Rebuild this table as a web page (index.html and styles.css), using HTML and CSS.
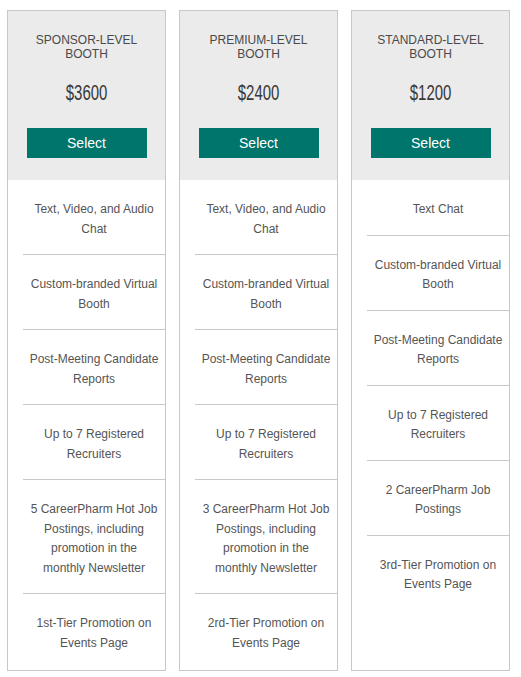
FILE: index.html
```html
<!DOCTYPE html>
<html lang="en">
<head>
<meta charset="utf-8">
<title>Booth Pricing</title>
<link rel="stylesheet" href="styles.css">
</head>
<body>
<div class="plans">
  <div class="card">
    <div class="card-head">
      <h2 class="title">SPONSOR-LEVEL<br>BOOTH</h2>
      <div class="price"><span class="price-num">$3600</span></div>
      <button class="select">Select</button>
    </div>
    <ul class="features">
      <li>Text, Video, and Audio Chat</li>
      <li>Custom-branded Virtual Booth</li>
      <li>Post-Meeting Candidate Reports</li>
      <li>Up to 7 Registered Recruiters</li>
      <li>5 CareerPharm Hot Job Postings, including promotion in the monthly Newsletter</li>
      <li>1st-Tier Promotion on Events Page</li>
    </ul>
  </div>
  <div class="card">
    <div class="card-head">
      <h2 class="title">PREMIUM-LEVEL<br>BOOTH</h2>
      <div class="price"><span class="price-num">$2400</span></div>
      <button class="select">Select</button>
    </div>
    <ul class="features">
      <li>Text, Video, and Audio Chat</li>
      <li>Custom-branded Virtual Booth</li>
      <li>Post-Meeting Candidate Reports</li>
      <li>Up to 7 Registered Recruiters</li>
      <li>3 CareerPharm Hot Job Postings, including promotion in the monthly Newsletter</li>
      <li>2rd-Tier Promotion on Events Page</li>
    </ul>
  </div>
  <div class="card">
    <div class="card-head">
      <h2 class="title">STANDARD-LEVEL<br>BOOTH</h2>
      <div class="price"><span class="price-num">$1200</span></div>
      <button class="select">Select</button>
    </div>
    <ul class="features">
      <li>Text Chat</li>
      <li>Custom-branded Virtual Booth</li>
      <li>Post-Meeting Candidate Reports</li>
      <li>Up to 7 Registered Recruiters</li>
      <li>2 CareerPharm Job Postings</li>
      <li>3rd-Tier Promotion on Events Page</li>
    </ul>
  </div>
</div>
</body>
</html>
```

FILE: styles.css
```css
html, body {
  margin: 0;
  padding: 0;
  background: #ffffff;
}

body {
  font-family: "Liberation Sans", Arial, Helvetica, sans-serif;
}

.plans {
  display: flex;
  align-items: stretch;
  gap: 13px;
  padding: 10px 0 0 7px;
}

.card {
  width: 157px;
  border: 1px solid #c8c8c8;
  background: #ffffff;
  display: flex;
  flex-direction: column;
  padding-bottom: 2px;
}

.card-head {
  background: #ebebeb;
  display: flex;
  flex-direction: column;
  align-items: center;
  padding: 22px 0 22px;
}

.title {
  margin: 0;
  font-size: 12px;
  line-height: 14px;
  font-weight: normal;
  color: #4a4a4a;
  text-align: center;
}

.price {
  margin-top: 17px;
  height: 30px;
  line-height: 30px;
  text-align: center;
}

.price-num {
  display: inline-block;
  font-family: "Liberation Sans", Arial, sans-serif;
  font-size: 22px;
  color: #383838;
  transform: scaleX(0.68);
}

.select {
  margin-top: 20px;
  width: 120px;
  height: 30px;
  border: 0;
  background: #00756b;
  color: #ffffff;
  font-family: "Liberation Sans", Arial, sans-serif;
  font-size: 14px;
  padding: 0;
  cursor: pointer;
}

.features {
  list-style: none;
  margin: 0 0 0 15px;
  padding: 0;
}

.features li {
  padding: 20px 6px 15px;
  font-size: 12px;
  line-height: 19.5px;
  color: #555555;
  text-align: center;
  border-top: 1px solid #c8c8c8;
}

.features li:first-child {
  border-top: 0;
}
```
